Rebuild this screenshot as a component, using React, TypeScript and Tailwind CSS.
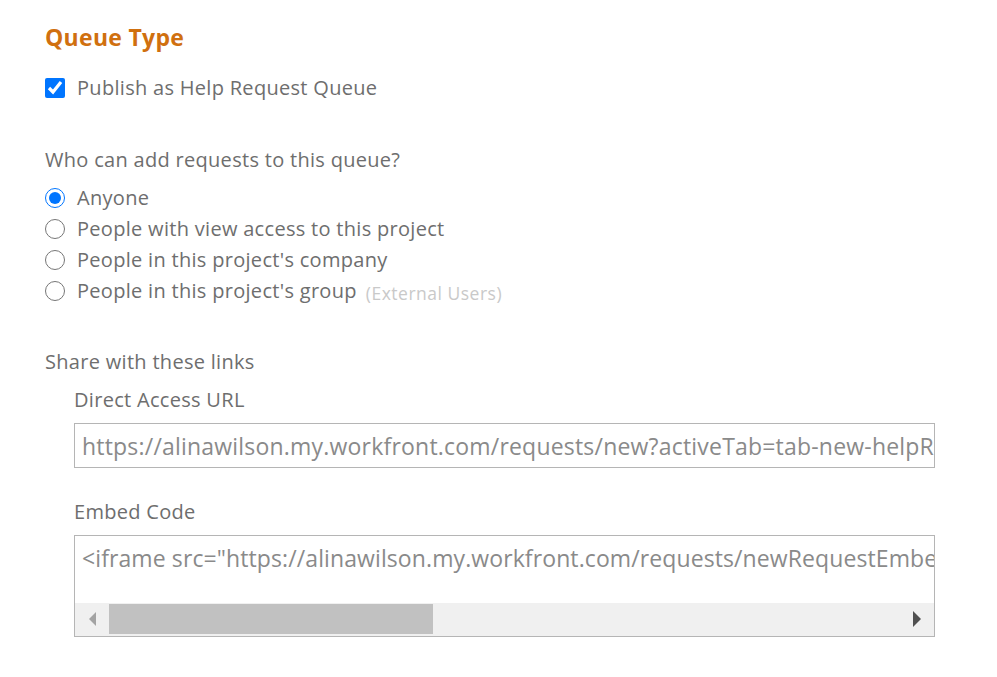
import React from "react";

const font = { fontFamily: '"Open Sans", "Lato", sans-serif' };

function Radio({ checked }: { checked?: boolean }) {
  return (
    <input
      type="radio"
      readOnly
      checked={!!checked}
      className="m-0 h-[20px] w-[20px] shrink-0 accent-[#0075ff]"
    />
  );
}

export default function App() {
  const options = [
    "Anyone",
    "People with view access to this project",
    "People in this project's company",
    "People in this project's group",
  ];
  return (
    <div className="min-h-[677px] w-[997px] bg-white text-[#6e6e6e] tracking-[0.3px]" style={font}>
      <div className="pl-[45px] pt-[22px]">
        <h2 className="text-[23px] font-bold leading-[30px] text-[#d0700f]">Queue Type</h2>
        <label className="mt-[22px] flex items-center gap-[12px] text-[20px] leading-[28px]">
          <input type="checkbox" readOnly checked className="m-0 h-[20px] w-[20px] accent-[#0075ff]" />
          <span>Publish as Help Request Queue</span>
        </label>

        <div className="mt-[45px] text-[20px] leading-[26px]">Who can add requests to this queue?</div>
        <div className="mt-[9px] flex flex-col">
          {options.map((o, i) => (
            <label key={o} className="flex h-[31.2px] items-center gap-[12px] text-[20px]">
              <Radio checked={i === 0} />
              <span>{o}</span>
              {i === 3 && (
                <span className="ml-[-3px] mt-[3px] text-[17.5px] tracking-[0.5px] text-[#c9c9c9]">(External Users)</span>
              )}
            </label>
          ))}
        </div>

        <div className="mt-[42px] text-[20px] leading-[26px]">Share with these links</div>
        <div className="pl-[29px]">
          <div className="mt-[12px] text-[20px] leading-[26px]">Direct Access URL</div>
          <div className="mt-[10px] h-[45px] w-[861px] overflow-hidden border border-[#b5b5b5] bg-white">
            <div className="whitespace-nowrap pl-[7px] pt-[7px] text-[23px] leading-[30px] tracking-[0.2px] text-[#8a8a8a]">
              https://alinawilson.my.workfront.com/requests/new?activeTab=tab-new-helpRequest&projectID=5f2a
            </div>
          </div>

          <div className="mt-[31px] text-[20px] leading-[26px]">Embed Code</div>
          <div className="mt-[10px] flex h-[102px] w-[861px] flex-col overflow-hidden border border-[#b5b5b5] bg-white">
            <div className="flex-1 overflow-hidden whitespace-nowrap pl-[7px] pt-[7px] text-[23px] leading-[30px] tracking-[0.1px] text-[#8a8a8a]">
              {'<iframe src="https://alinawilson.my.workfront.com/requests/newRequestEmbedded?projectID=5f2a'}
            </div>
            <div className="flex h-[33px] items-center bg-[#f0f0f0]">
              <div className="flex w-[34px] justify-center">
                <div className="h-0 w-0 border-y-[7px] border-r-[7px] border-y-transparent border-r-[#a3a3a3]" />
              </div>
              <div className="h-[30px] w-[324px] bg-[#c1c1c1]" />
              <div className="flex-1" />
              <div className="flex w-[34px] justify-center">
                <div className="h-0 w-0 border-y-[8px] border-l-[8px] border-y-transparent border-l-[#505050]" />
              </div>
            </div>
          </div>
        </div>
      </div>
    </div>
  );
}
